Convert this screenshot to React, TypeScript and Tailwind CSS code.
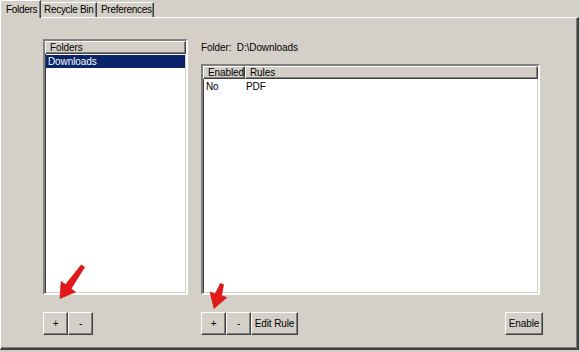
import React from "react";

const raised =
  "border-t border-l border-white border-b border-r border-b-[#404040] border-r-[#404040] shadow-[inset_-1px_-1px_0_#808080]";

const sunken =
  "border-2 border-t-[#808080] border-l-[#808080] border-b-white border-r-white shadow-[inset_1px_1px_0_#404040,inset_-1px_-1px_0_#d4d0c8]";

function Button({ label, width }: { label: string; width: string }) {
  return (
    <div
      className={`${raised} ${width} h-[23px] flex items-center justify-center bg-[#d4d0c8] leading-none whitespace-nowrap`}
    >
      {label}
    </div>
  );
}

function HeaderCell({ label, width }: { label: string; width: string }) {
  return (
    <div
      className={`${raised} ${width} h-[13px] flex items-center pl-[4px] leading-none bg-[#d4d0c8] whitespace-nowrap overflow-hidden`}
    >
      {label}
    </div>
  );
}

function Arrows() {
  return (
    <svg
      className="absolute inset-0 pointer-events-none"
      width="580"
      height="352"
      viewBox="0 0 580 352"
    >
      <polygon
        points="84.6,267.2 71.1,288.8 75.5,292 60,298.5 61.1,281.4 65.5,284.6 81.4,264.8"
        fill="#e31818"
        stroke="#c40f0f"
        strokeWidth="0.6"
        strokeLinejoin="round"
      />
      <polygon
        points="223.6,284.5 221.6,295.7 226.8,297.5 214,308.5 210,291.9 215.2,293.7 220.4,283.5"
        fill="#e31818"
        stroke="#c40f0f"
        strokeWidth="0.6"
        strokeLinejoin="round"
      />
    </svg>
  );
}

export default function App() {
  return (
    <div className="relative w-[580px] h-[352px] overflow-hidden bg-[#d4d0c8] text-[10px] tracking-[-0.1px] text-black font-['Liberation_Sans',Arial,sans-serif]">
      {/* tabs */}
      <div className="flex items-end h-[17px] whitespace-nowrap tracking-[-0.3px]">
        <div className="relative z-10 mb-[-1px] h-[18px] w-[41px] bg-[#d4d0c8] border-t border-l border-white border-r border-r-[#404040] shadow-[inset_-1px_0_0_#808080] rounded-tl-[2px] pl-[5px] pt-[2px] leading-[13px]">
          Folders
        </div>
        <div className="h-[15px] w-[56px] bg-[#d4d0c8] border-t border-white border-r border-r-[#404040] shadow-[inset_-1px_0_0_#808080] pl-[3px] leading-[14px]">
          Recycle Bin
        </div>
        <div className="h-[15px] w-[57px] bg-[#d4d0c8] border-t border-white border-r border-r-[#404040] shadow-[inset_-1px_0_0_#808080] pl-[4px] leading-[14px]">
          Preferences
        </div>
      </div>

      {/* tab panel */}
      <div className="w-[579px] h-[333px] border-t border-l border-white border-r-2 border-b-2 border-r-[#404040] border-b-[#404040] shadow-[inset_-1px_-1px_0_#808080] flex pl-[42px] pt-[21px]">
        {/* folders column */}
        <div className="flex flex-col w-[145px]">
          <div className={`${sunken} h-[256px] bg-white flex flex-col`}>
            <HeaderCell label="Folders" width="w-full" />
            <div className="mt-[1px] ml-[1px] mr-[1px] h-[13px] bg-[#0a246a] text-white pl-[2px] leading-[13px]">
              Downloads
            </div>
          </div>
          <div className="mt-[17px] flex">
            <Button label="+" width="w-[25px]" />
            <Button label="-" width="w-[25px]" />
          </div>
        </div>

        {/* rules column */}
        <div className="flex flex-col ml-[13px] w-[342px]">
          <div className="h-[25px] pt-[2px] leading-[13px] whitespace-pre">
            {"Folder:  D:\\Downloads"}
          </div>
          <div className={`${sunken} w-[339px] h-[231px] bg-white flex flex-col`}>
            <div className="flex">
              <HeaderCell label="Enabled" width="w-[42px]" />
              <HeaderCell label="Rules" width="flex-1" />
            </div>
            <div className="flex h-[14px] mt-[1px] leading-[14px]">
              <div className="w-[42px] pl-[3px]">No</div>
              <div className="pl-[1px]">PDF</div>
            </div>
          </div>
          <div className="mt-[17px] flex justify-between">
            <div className="flex">
              <Button label="+" width="w-[25px]" />
              <Button label="-" width="w-[25px]" />
              <Button label="Edit Rule" width="w-[47px]" />
            </div>
            <Button label="Enable" width="w-[38px]" />
          </div>
        </div>
      </div>

      <Arrows />
    </div>
  );
}
